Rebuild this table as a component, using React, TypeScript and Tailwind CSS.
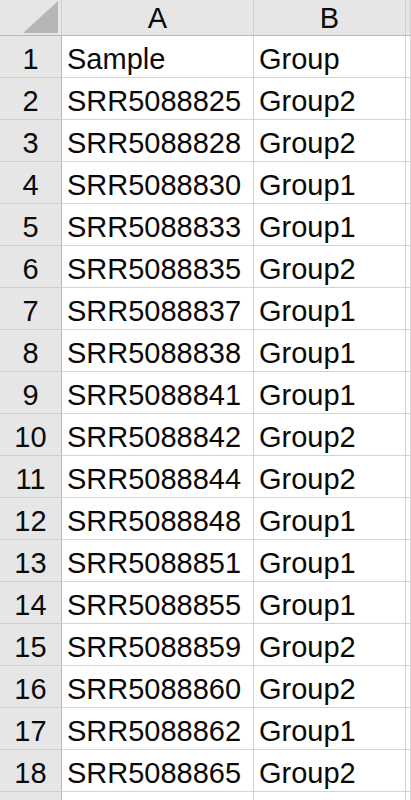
const rows: [string, string][] = [
  ["Sample", "Group"],
  ["SRR5088825", "Group2"],
  ["SRR5088828", "Group2"],
  ["SRR5088830", "Group1"],
  ["SRR5088833", "Group1"],
  ["SRR5088835", "Group2"],
  ["SRR5088837", "Group1"],
  ["SRR5088838", "Group1"],
  ["SRR5088841", "Group1"],
  ["SRR5088842", "Group2"],
  ["SRR5088844", "Group2"],
  ["SRR5088848", "Group1"],
  ["SRR5088851", "Group1"],
  ["SRR5088855", "Group1"],
  ["SRR5088859", "Group2"],
  ["SRR5088860", "Group2"],
  ["SRR5088862", "Group1"],
  ["SRR5088865", "Group2"],
];

const font = { fontFamily: '"Liberation Sans", "Noto Sans CJK SC", sans-serif' };

const headCell = "flex h-[36px] shrink-0 items-center justify-center border-b border-r border-b-[#b8b8b8] border-r-[#cfcfcf] bg-[#e6e6e6] pt-[3px]";
const rowHead = "flex h-[42px] w-[62px] shrink-0 items-center justify-center border-b border-r border-b-[#cfcfcf] border-r-[#b8b8b8] bg-[#e6e6e6] pt-[6px]";
const cell = "flex h-[42px] shrink-0 items-center border-b border-r border-[#d4d4d4] pt-[6px]";

export default function App() {
  return (
    <div className="h-[800px] w-[411px] overflow-hidden bg-white text-[29px] text-[#0a0a0a]" style={font}>
      <div className="flex">
        <div className={`${headCell} w-[62px] items-end justify-end border-r-[#b8b8b8] pb-[2px] pr-[3px] pt-0`}>
          <svg width="35" height="32" viewBox="0 0 35 32">
            <polygon points="35,0 35,32 0,32" fill="#b6b6b6" />
          </svg>
        </div>
        <div className={`${headCell} w-[192px]`}>A</div>
        <div className={`${headCell} w-[152px]`}>B</div>
        <div className={`${headCell} flex-1`} />
      </div>
      {rows.map((r, i) => (
        <div key={i} className="flex">
          <div className={rowHead}>{i + 1}</div>
          <div className={`${cell} w-[192px] pl-[5px]`}>{r[0]}</div>
          <div className={`${cell} w-[152px] pl-[5px]`}>{r[1]}</div>
          <div className={`${cell} flex-1`} />
        </div>
      ))}
      {/* row 19, only its top edge shows */}
      <div className="flex">
        <div className={rowHead} />
        <div className={`${cell} w-[192px]`} />
        <div className={`${cell} w-[152px]`} />
        <div className={`${cell} flex-1`} />
      </div>
    </div>
  );
}
